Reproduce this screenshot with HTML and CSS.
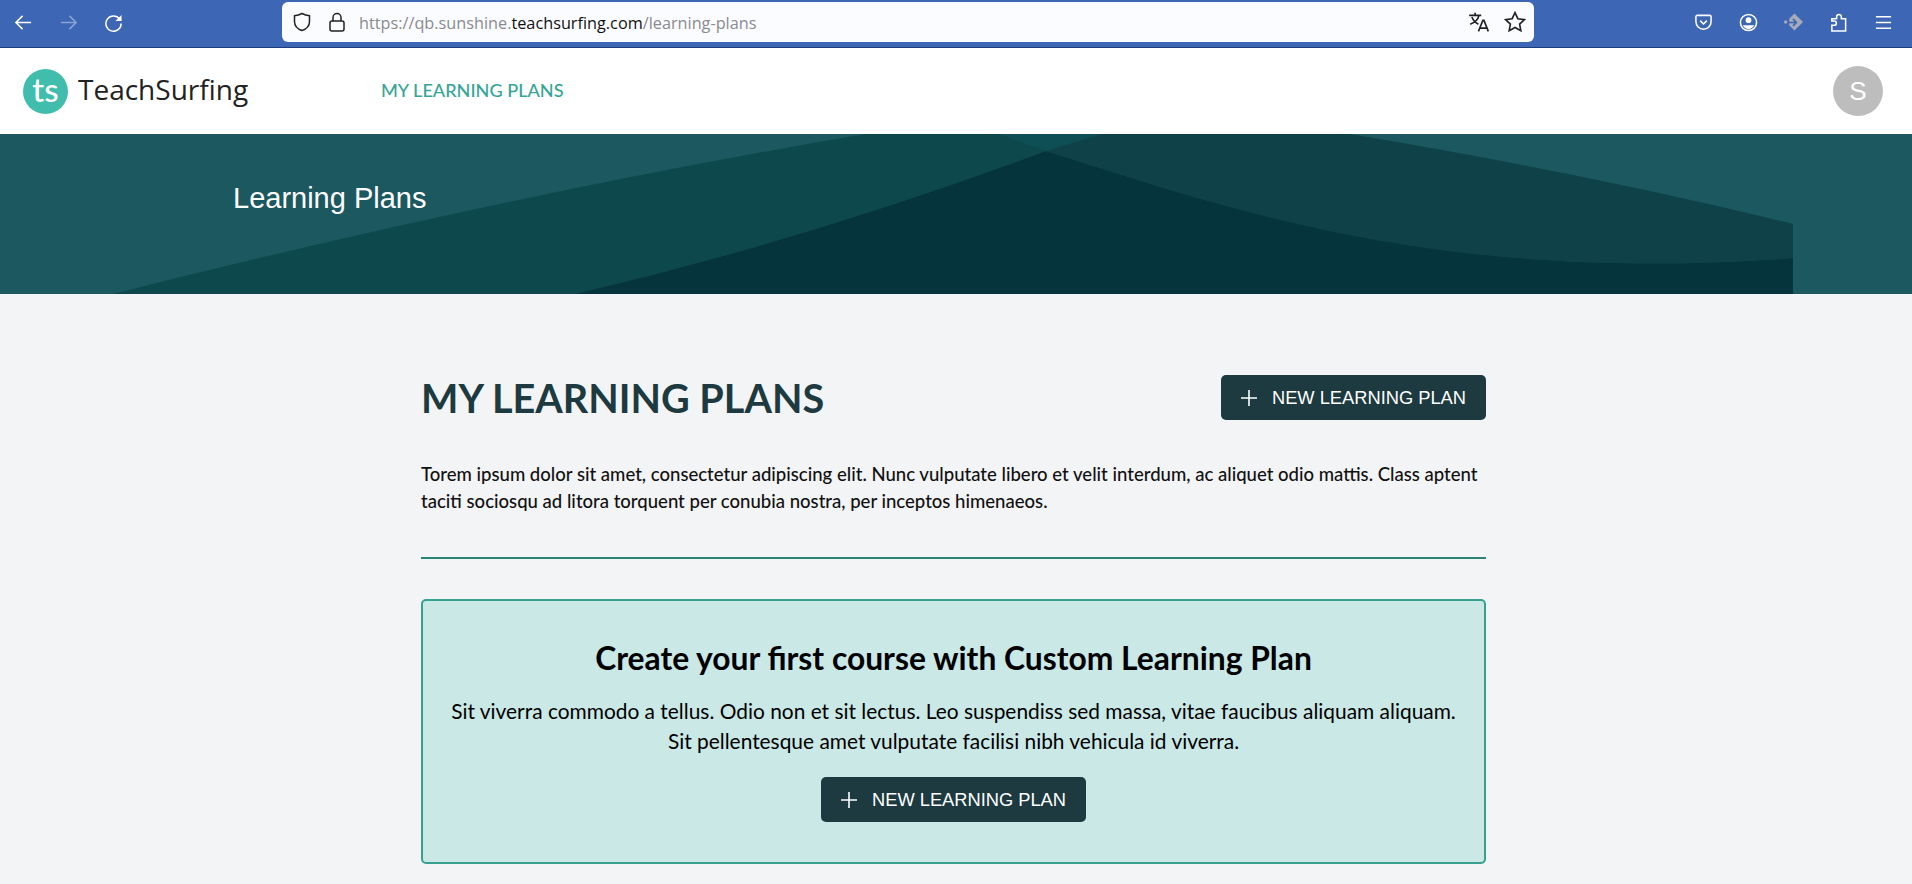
FILE: index.html
```html
<!DOCTYPE html>
<html lang="en">
<head>
  <meta charset="UTF-8" />
  <meta name="viewport" content="width=device-width, initial-scale=1.0"/>
  <title>Learning Plans</title>
  <link rel="stylesheet" href="styles.css">
</head>
<body>

  <div class="browser-bar">
    <div class="nav-icons">
      <svg class="tool-icon" viewBox="0 0 20 20"><path d="M18 10H2M9 3l-7 7 7 7"/></svg>
      <svg class="tool-icon dim" viewBox="0 0 20 20"><path d="M2 10h16M11 3l7 7-7 7"/></svg>
      <svg class="tool-icon" viewBox="0 0 20 20"><path d="M16.5 6.500A8 8 0 1 0 18 11"/><path class="solid" d="M18.500 2v6.500H12z"/></svg>
    </div>
    <div class="url-box">
      <svg class="url-icon" viewBox="0 0 20 20"><path d="M10 1.500c2.500 1.300 5 2 7.500 2.300v5.700c0 4.200-3 7.500-7.500 9-4.500-1.500-7.500-4.800-7.500-9V3.800C5 3.500 7.500 2.800 10 1.500z"/></svg>
      <svg class="url-icon lock" viewBox="0 0 20 20"><rect x="3" y="9" width="14" height="10" rx="2"/><path d="M6 9V5.500a4 4 0 0 1 8 0V9"/></svg>
      <span class="url-text">https://qb.sunshine.<b>teachsurfing.com</b>/learning-plans</span>
      <span class="url-end">
        <svg class="url-icon big" viewBox="0 0 20 20"><path d="M1 4h11M6.500 1.500V4M10 4c-.8 3.500-3.500 6.500-8 8M3.500 5.500c1 2.500 3 5 6 6.500M9.500 18.500l4-10 1 0 4 10M11 15.500h6"/></svg>
        <svg class="url-icon big" viewBox="0 0 20 20"><path d="M10 1.500l2.600 5.500 6 .8-4.400 4.100 1.100 6L10 15l-5.300 2.900 1.100-6L1.400 7.800l6-.8z"/></svg>
      </span>
    </div>
    <div class="ext-icons">
      <svg class="tool-icon thin" viewBox="0 0 20 20"><path d="M3.500 2.500h13c.8 0 1.500.7 1.500 1.500v5c0 4.500-3.500 8-8 8s-8-3.500-8-8V4c0-.8.7-1.500 1.500-1.500z"/><path d="M6.500 8l3.500 3.500L13.500 8"/></svg>
      <svg class="tool-icon thin" viewBox="0 0 20 20"><circle cx="10" cy="10" r="8.500"/><circle class="solid" cx="10" cy="7.500" r="3"/><path class="solid" d="M4 13h12c-1 2.500-3.500 4-6 4s-5-1.500-6-4z"/></svg>
      <svg class="tool-icon grey" viewBox="0 0 20 20"><path d="M11 .5L20 9.500 11 18.500 5.500 13V6z"/><circle cx="1.800" cy="9.500" r="1.800"/><path class="cut" d="M5 10h8M9.500 6.500L13 10l-3.500 3.500"/></svg>
      <svg class="tool-icon thin" viewBox="0 0 20 20"><path d="M3 19V13h2.500a2 2 0 0 0 0-4.500H3V6h5V4a2.500 2.500 0 0 1 5 0v2h4.500v13z"/></svg>
      <svg class="tool-icon thin" viewBox="0 0 20 20"><path d="M2 4h16M2 10h16M2 16h16"/></svg>
    </div>
  </div>

  <header class="site-header">
    <div class="logo">
      <span class="logo-mark">ts</span>
      <span class="logo-name">TeachSurfing</span>
    </div>
    <a class="nav-link" href="#">MY LEARNING PLANS</a>
    <div class="avatar">S</div>
  </header>

  <section class="banner">
    <svg class="banner-art" viewBox="0 0 1793 160" preserveAspectRatio="none">
      <path fill="#0d484d" d="M113 160Q500 62 865 0H1102L1046 17Q810 105 575 160Z"/>
      <path fill="#0e4f55" d="M998 0H1102L1046 17Z"/>
      <path fill="#0e4248" d="M1102 0H1350Q1590 40 1793 90V124C1440 150 1230 75 1046 17Z"/>
      <path fill="#06343c" d="M575 160Q810 105 1046 17C1230 75 1440 150 1793 124V160Z"/>
    </svg>
    <h2 class="banner-title">Learning Plans</h2>
  </section>

  <main class="content">
    <div class="page-head">
      <h1>MY LEARNING PLANS</h1>
      <button class="btn">
        <svg viewBox="0 0 16 16"><path d="M8 0v16M0 8h16"/></svg>
        NEW LEARNING PLAN
      </button>
    </div>

    <p class="intro">Torem ipsum dolor sit amet, consectetur adipiscing elit. Nunc vulputate libero et velit interdum, ac aliquet odio mattis. Class aptent taciti sociosqu ad litora torquent per conubia nostra, per inceptos himenaeos.</p>

    <hr class="divider">

    <div class="empty-card">
      <h3>Create your first course with Custom Learning Plan</h3>
      <p>Sit viverra commodo a tellus. Odio non et sit lectus. Leo suspendiss sed massa, vitae faucibus aliquam aliquam.<br>Sit pellentesque amet vulputate facilisi nibh vehicula id viverra.</p>
      <button class="btn">
        <svg viewBox="0 0 16 16"><path d="M8 0v16M0 8h16"/></svg>
        NEW LEARNING PLAN
      </button>
    </div>
  </main>

</body>
</html>
```

FILE: styles.css
```css
* {
  box-sizing: border-box;
}

body {
  margin: 0;
  background-color: #f3f4f6;
  font-family: Lato, "Open Sans", sans-serif;
  color: #111;
}

/* browser chrome */
.browser-bar {
  display: flex;
  align-items: flex-start;
  height: 48px;
  background-color: #3d66b5;
  border-bottom: 1px solid #1c3c7c;
  padding-top: 2px;
}

.nav-icons {
  display: flex;
  gap: 26px;
  width: 282px;
  padding: 11px 0 0 14px;
}

.tool-icon {
  width: 19px;
  height: 19px;
  fill: none;
  stroke: #fff;
  stroke-width: 1.6;
}

.tool-icon.dim {
  opacity: 0.4;
}

.tool-icon .solid {
  fill: #fff;
  stroke: none;
}

.tool-icon.grey {
  fill: #a5abb8;
  stroke: none;
}

.tool-icon .cut {
  fill: none;
  stroke: #3d66b5;
  stroke-width: 1.8;
}

.url-box {
  display: flex;
  align-items: center;
  width: 1252px;
  height: 40px;
  background-color: #fbfcff;
  border-radius: 6px;
  padding: 0 8px 0 10px;
}

.url-icon {
  width: 20px;
  height: 20px;
  fill: none;
  stroke: #222;
  stroke-width: 1.5;
  flex-shrink: 0;
}

.url-icon.big {
  width: 22px;
  height: 22px;
}

.url-icon.lock {
  margin-left: 15px;
}

.url-text {
  margin-left: 12px;
  padding-top: 2px;
  font-family: "Open Sans", sans-serif;
  font-size: 16.25px;
  color: #8a8a8f;
}

.url-text b {
  font-weight: 400;
  color: #111;
}

.url-end {
  display: flex;
  gap: 14px;
  margin-left: auto;
}

.ext-icons {
  display: flex;
  gap: 26px;
  margin-left: 160px;
  padding-top: 11px;
}

/* site header */
.site-header {
  display: flex;
  align-items: center;
  height: 86px;
  background: white;
  padding: 0 29px 0 23px;
}

.logo {
  display: flex;
  align-items: center;
  gap: 10px;
  width: 358px;
}

.logo-mark {
  display: flex;
  align-items: center;
  justify-content: center;
  width: 45px;
  height: 45px;
  border-radius: 50%;
  background-color: #41bdad;
  color: white;
  font-size: 33px;
  font-weight: 500;
  line-height: 1;
  padding-bottom: 4px;
}

.logo-name {
  padding-bottom: 4px;
  font-family: "Open Sans", sans-serif;
  font-size: 28px;
  color: #222;
}

.nav-link {
  padding-bottom: 3px;
  font-size: 18.1px;
  font-weight: 500;
  color: #35a596;
  text-decoration: none;
}

.avatar {
  display: flex;
  align-items: center;
  justify-content: center;
  width: 50px;
  height: 50px;
  margin-left: auto;
  border-radius: 50%;
  background-color: #bdbdbd;
  color: white;
  font-family: "Liberation Sans", sans-serif;
  font-size: 26px;
}

/* banner */
.banner {
  position: relative;
  height: 160px;
  background-color: #1c5860;
  padding: 46px 0 0 233px;
}

.banner-art {
  position: absolute;
  left: 0;
  top: 0;
  width: 1793px;
  height: 160px;
}

.banner-title {
  position: relative;
  margin: 0;
  font-family: "Liberation Sans", sans-serif;
  font-size: 29px;
  font-weight: 400;
  line-height: 36px;
  color: white;
}

/* main content */
.content {
  width: 1065px;
  margin-left: 421px;
  padding: 81px 0 19px;
}

.page-head {
  display: flex;
  align-items: center;
  justify-content: space-between;
  height: 45px;
}

h1 {
  margin: 0;
  font-size: 39.6px;
  font-weight: 700;
  color: #1c3a40;
}

.btn {
  display: inline-flex;
  align-items: center;
  gap: 15px;
  height: 45px;
  padding: 1px 20px 0;
  background-color: #1c3a40;
  color: white;
  border: none;
  border-radius: 5px;
  font-family: "Liberation Sans", sans-serif;
  font-size: 18.3px;
  cursor: pointer;
}

.btn svg {
  width: 16px;
  height: 16px;
  fill: none;
  stroke: white;
  stroke-width: 1.6;
}

.intro {
  margin: 41px 0 0;
  font-size: 18.55px;
  font-weight: 500;
  line-height: 27px;
}

.divider {
  margin: 42px 0 0;
  border: none;
  border-top: 2px solid #2a8577;
}

.empty-card {
  margin-top: 40px;
  height: 265px;
  padding: 38px 0 0;
  background-color: #c9e8e6;
  border: 2px solid #38a090;
  border-radius: 5px;
  text-align: center;
}

.empty-card h3 {
  margin: 0;
  font-size: 31.8px;
  font-weight: 700;
  line-height: 38px;
  color: #000;
}

.empty-card p {
  margin: 19px 0 21px;
  font-size: 20.9px;
  line-height: 30px;
  color: #000;
}
```
